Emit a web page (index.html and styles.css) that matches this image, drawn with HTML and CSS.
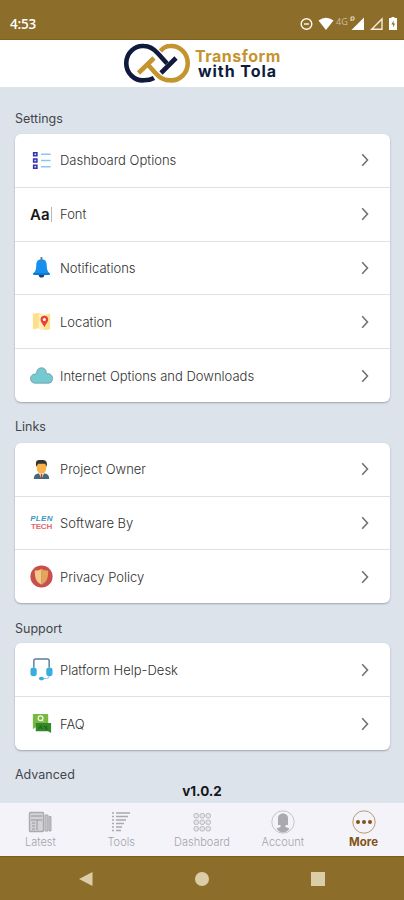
FILE: index.html
```html
<!DOCTYPE html>
<html lang="en">
<head>
<meta charset="utf-8">
<title>Transform with Tola</title>
<link rel="stylesheet" href="styles.css">
</head>
<body>
<div class="app">
  <div class="status">
    <span class="time">4:53</span>
    <svg class="indicators" width="98" height="16" viewBox="0 0 98 16">
      <g fill="none" stroke="#fffaf0" stroke-width="1.4"><circle cx="6.500" cy="8" r="5.300"/><path d="M4 8h5"/></g>
      <path d="M18.500 4.500Q26 -.8 33.500 4.500L26 14z" fill="#fff"/>
      <text class="network" x="36" y="9">4G</text>
      <path d="M64 1.500V14H51.500z" fill="#fff"/><path d="M51 1v4M51 1h3v3h-3" stroke="#eee2c8" fill="none"/>
      <path d="M82 3v10.300H71.700z" fill="none" stroke="#f6eddc" stroke-width="1.400"/>
      <path d="M90 2h1.500V1h3v1H97v12h-8V2z" fill="#fff"/><path d="M93.500 4.500l-2 4h1.700v3l1.800-4h-1.500z" fill="#8c6d2a"/>
    </svg>
  </div>
  <header class="brand">
    <svg class="logo" width="66" height="42" viewBox="0 0 66 42" fill="none" stroke-width="4.600">
      <path d="M30 36C26.500 38 23 38.300 20 38.300A16.500 17.200 0 1 1 20 4C26 4 30 7 34 11.500L43 21.500" stroke="#101a3c"/>
      <path d="M36.500 9C39.500 5.500 42 4 46 4A16.500 17.200 0 1 1 46 38.300C38 38.300 34 34 30 29.500L22.500 21" stroke="#c4942f"/>
      <path d="M14.500 31L30 16" stroke="#c4942f"/>
      <path d="M37 31L52 16" stroke="#101a3c"/>
    </svg>
    <div class="wordmark"><div class="gold">Transform</div><div class="navy">with Tola</div></div>
  </header>
  <main class="content">
    <h2>Settings</h2>
    <section class="card">
      <div class="row"><svg class="icon" viewBox="0 0 24 24"><g fill="#dedcff" stroke="#3731ad" stroke-width="1.600"><path d="M3.800 4h3.400v3H3.800zM3.800 10.500h3.400v3H3.800zM3.800 17h3.400v3H3.800z"/></g><path d="M11.500 5.500h10M11.500 12h10M11.500 18.500h10" stroke="#8bc5f4" stroke-width="1.500"/></svg><span class="label">Dashboard Options</span><svg class="chevron" viewBox="0 0 8 14"><path d="M1.200 1.200L6.500 7l-5.300 5.800"/></svg></div>
      <div class="row"><span class="icon font-icon">Aa<i></i></span><span class="label">Font</span><svg class="chevron" viewBox="0 0 8 14"><path d="M1.200 1.200L6.500 7l-5.300 5.800"/></svg></div>
      <div class="row"><svg class="icon" viewBox="0 0 24 24"><path d="M12 1v4" stroke="#80766e" stroke-width="2"/><path d="M12 3.500c-4 0-5.500 3-5.500 6.500 0 4-.5 6-3 8v1.500h17V18c-2.500-2-3-4-3-8 0-3.500-1.500-6.500-5.500-6.500z" fill="#168fee"/><path d="M9 19.500h6c0 4-6 4-6 0z" fill="#17447c"/><path d="M3.500 18h17v1.700h-17z" fill="#0875cf"/></svg><span class="label">Notifications</span><svg class="chevron" viewBox="0 0 8 14"><path d="M1.200 1.200L6.500 7l-5.300 5.800"/></svg></div>
      <div class="row"><svg class="icon" viewBox="0 0 24 24"><path d="M3 4l6-1 6 2 6-1v16l-6 1-6-2-6 1z" fill="#ffe08a"/><path d="M9 3l6 2v16l-6-2z" fill="#ffeeb8"/><path d="M15 18c-2-4-4-5.500-4-8a4 4 0 1 1 8 0c0 2.500-2 4-4 8z" fill="#e94335"/><circle cx="15" cy="10" r="1.600" fill="#fff"/></svg><span class="label">Location</span><svg class="chevron" viewBox="0 0 8 14"><path d="M1.200 1.200L6.500 7l-5.300 5.800"/></svg></div>
      <div class="row"><svg class="icon" viewBox="0 0 24 24"><path d="M5.500 20A4.500 4.500 0 0 1 5 10.500c1-.5 1.500-.4 2-.4C6 2 18 2 17 10.100c3.500-.6 6.500 1.200 6.500 4.900S21.500 20 19 20z" fill="#75cad2" stroke="#6b979d" stroke-width=".8"/></svg><span class="label">Internet Options and Downloads</span><svg class="chevron" viewBox="0 0 8 14"><path d="M1.200 1.200L6.500 7l-5.300 5.800"/></svg></div>
    </section>
    <h2>Links</h2>
    <section class="card links">
      <div class="row"><svg class="icon" viewBox="0 0 24 24"><path d="M4 22c0-4 2-5.500 6-6h4c4 .5 6 2 6 6z" fill="#426a7c"/><path d="M9 15h6l-3 7z" fill="#fff"/><path d="M12 16l1 1.500-.5 4.500h-1l-.5-4.500z" fill="#c43b35"/><path d="M7 6c0-5 10-5 10 0v4c0 4-2 6.500-5 6.500S7 14 7 10z" fill="#f9b347"/><path d="M6.500 9C5 1 9 2 12 2c4 0 6.500 1 5.500 7l-1.800-3H8.500z" fill="#343433"/></svg><span class="label">Project Owner</span><svg class="chevron" viewBox="0 0 8 14"><path d="M1.200 1.200L6.500 7l-5.300 5.800"/></svg></div>
      <div class="row"><span class="icon tech"><b>PLEN</b><em>TECH</em></span><span class="label">Software By</span><svg class="chevron" viewBox="0 0 8 14"><path d="M1.200 1.200L6.500 7l-5.300 5.800"/></svg></div>
      <div class="row"><svg class="icon" viewBox="0 0 24 24"><circle cx="12" cy="12" r="11.600" fill="#c94f4c"/><path d="M12 4c-2 1.500-4 1.800-7 1.800C5 13 6 18 12 20.500z" fill="#f4c987"/><path d="M12 4c2 1.500 4 1.800 7 1.800C19 13 18 18 12 20.500z" fill="#e3a55c"/></svg><span class="label">Privacy Policy</span><svg class="chevron" viewBox="0 0 8 14"><path d="M1.200 1.200L6.500 7l-5.300 5.800"/></svg></div>
    </section>
    <h2>Support</h2>
    <section class="card support">
      <div class="row"><svg class="icon" viewBox="0 0 24 24"><path d="M4 10V3q0-2 2-2h12q2 0 2 2v7" fill="none" stroke="#587d95" stroke-width="1.500"/><g fill="#38aede"><rect x=".5" y="10" width="6.500" height="9" rx="2.800"/><rect x="17" y="10" width="6.500" height="9" rx="2.800"/><ellipse cx="12" cy="21.500" rx="2.800" ry="1.900"/></g><path d="M20 19q0 2.500-3 2.500h-3" fill="none" stroke="#80c6df"/></svg><span class="label">Platform Help-Desk</span><svg class="chevron" viewBox="0 0 8 14"><path d="M1.200 1.200L6.500 7l-5.300 5.800"/></svg></div>
      <div class="row"><svg class="icon" viewBox="0 0 24 24"><path d="M3 2h15q1 0 1 1v12H7l-4 3V3z" fill="#79b943"/><circle cx="11" cy="6.500" r="2.500" fill="none" stroke="#eefadf" stroke-width="1.300"/><path d="M12 8l2 2" stroke="#eefadf"/><path d="M6 11.500h16v10.500l-3-2H6z" fill="#338929"/><path d="M9 18l2-4 2 4M10 16.500h2M14 15h2v3M18 15h-1v3h2" fill="none" stroke="#1e6418"/></svg><span class="label">FAQ</span><svg class="chevron" viewBox="0 0 8 14"><path d="M1.200 1.200L6.500 7l-5.300 5.800"/></svg></div>
    </section>
    <h2>Advanced</h2>
  </main>
  <div class="version">v1.0.2</div>
  <nav class="tabs">
    <div class="tab"><svg viewBox="0 0 24 24"><rect x="1.500" y="2.500" width="14" height="19" rx="1" fill="#d3d2d7" stroke="#aaa9ad" stroke-width="1.400"/><path d="M3 6h11M3 10h11M9 10v10M4 13h3M4 16h3M4 19h3" fill="none" stroke="#aaa9ad" stroke-width="1.400"/><path d="M17 5h3v16h-3zM21 6.500h2V21h-2z" fill="#c5c4c9" stroke="#aaa9ad"/></svg><span>Latest</span></div>
    <div class="tab"><svg viewBox="0 0 24 24" stroke="#aaa9ad" stroke-width="1.400"><path d="M3 3h2M3 6.500h2M3 10h2M3 13.500h2M3 17h2M3 20.500h2M7 3h14M7 6.500h12M7 10h10M7 13.500h8M7 17h6M7 20.500h5"/></svg><span>Tools</span></div>
    <div class="tab"><svg viewBox="0 0 24 24" fill="#e6e5ea" stroke="#b9b8bd"><rect x="4" y="3.500" width="4.500" height="4.500" rx="1.800"/><rect x="10" y="3.500" width="4.500" height="4.500" rx="1.800"/><rect x="16" y="3.500" width="4.500" height="4.500" rx="1.800"/><rect x="4" y="10" width="4.500" height="4.500" rx="1.800"/><rect x="10" y="10" width="4.500" height="4.500" rx="1.800"/><rect x="16" y="10" width="4.500" height="4.500" rx="1.800"/><rect x="4" y="16.500" width="4.500" height="4.500" rx="1.800"/><rect x="10" y="16.500" width="4.500" height="4.500" rx="1.800"/><rect x="16" y="16.500" width="4.500" height="4.500" rx="1.800"/></svg><span>Dashboard</span></div>
    <div class="tab"><svg viewBox="0 0 24 24"><circle cx="12" cy="12" r="11.200" fill="none" stroke="#bab9bd" stroke-width=".8"/><path d="M7 15V8c0-6 10-6 10 0v7h-2.500v2l4 1.500Q16 22.500 12 22.500T5.500 18.500l4-1.500v-2z" fill="#aaa9ad"/></svg><span>Account</span></div>
    <div class="tab active"><svg viewBox="0 0 24 24"><circle cx="12" cy="12" r="11.200" fill="none" stroke="#ad945f" stroke-width=".9"/><g fill="#805414"><circle cx="6" cy="12" r="2"/><circle cx="12" cy="12" r="2"/><circle cx="18" cy="12" r="2"/></g></svg><span>More</span></div>
  </nav>
  <div class="system">
    <svg width="16" height="16"><path d="M1 8L14.500 1v14z"/></svg>
    <svg width="16" height="16"><circle cx="8" cy="8" r="7"/></svg>
    <svg width="16" height="16"><path d="M1 1h14v14H1z"/></svg>
  </div>
</div>
</body>
</html>
```
FILE: styles.css
```css
* { box-sizing: border-box; }
body { margin: 0; font-family: Inter, "Open Sans", sans-serif; }
.app { width: 404px; height: 900px; display: flex; flex-direction: column; overflow: hidden; background: #dde3eb; }
.status { height: 40px; flex: none; display: flex; align-items: flex-start; justify-content: space-between; padding: 16px 6px 0 10px; background: #8c6d2a; border-bottom: 1px solid #846018; }
.time { color: #fff; font: 600 13.5px/17px "Open Sans", sans-serif; letter-spacing: -.2px; }
.network { fill: #cdbd9a; font: 9px "Open Sans", sans-serif; }
.brand { height: 47px; flex: none; display: flex; padding: 2px 0 0 124px; background: #fff; }
.logo { flex: none; overflow: visible; }
.wordmark { display: flex; flex-direction: column; margin-left: 5px; padding-top: 7px; font-size: 16px; line-height: 15px; font-weight: 700; white-space: nowrap; }
.gold { color: #c4942f; letter-spacing: .5px; }
.navy { color: #101a3c; padding-left: 3px; letter-spacing: .95px; }
.content { height: 692px; flex: none; overflow: hidden; padding: 21px 14px 0 15px; }
h2 { margin: 0; height: 26px; font-size: 12.5px; line-height: 22px; font-weight: 400; color: #42464c; }
.card { height: 268px; display: flex; flex-direction: column; background: #fff; border-radius: 6px; box-shadow: 0 1px 2px #9fa4ad; margin-bottom: 14px; }
.card.links { height: 160px; margin: 1px 0 15px; }
.card.support { height: 107px; margin: -1px 0 14px; }
.row { flex: 1; display: flex; align-items: center; padding: 0 21px 0 15px; border-bottom: 1px solid #dfe1e5; }
.row:last-child { border-bottom: 0; }
.icon { width: 23px; height: 23px; flex: none; }
.label { flex: 1; margin-left: 7px; font-size: 13px; font-weight: 300; color: #303030; white-space: nowrap; }
.chevron { width: 8px; height: 14px; fill: none; stroke: #727272; stroke-width: 1.6; }
.font-icon { display: flex; align-items: center; font-size: 15px; font-weight: 600; color: #171717; }
.font-icon i { width: 1px; height: 15px; flex: none; background: #b8b8b8; margin-left: 1px; }
.tech { display: flex; flex-direction: column; align-items: center; justify-content: center; font: 700 8px/8px "Liberation Sans", sans-serif; }
.tech b { color: #3b9ac3; font-style: italic; letter-spacing: .3px; }
.tech em { color: #df6870; font-style: normal; letter-spacing: -.2px; }
.version { height: 24px; flex: none; text-align: center; font-size: 13.5px; line-height: 24px; font-weight: 700; color: #14171d; }
.tabs { height: 53px; flex: none; display: flex; background: #f4f3fa; }
.tab { flex: 1; display: flex; flex-direction: column; align-items: center; padding-top: 7px; font-size: 11px; line-height: 14px; font-weight: 300; color: #a4a3a8; }
.tab svg { width: 24px; height: 24px; margin-bottom: 1px; }
.tab.active { color: #805414; font-weight: 700; font-size: 11.5px; }
.system { height: 44px; flex: none; display: flex; align-items: center; justify-content: space-between; padding: 0 78px; background: #8c6d2a; border-top: 1px solid #805b15; }
.system svg { fill: #dccda9; }
```
